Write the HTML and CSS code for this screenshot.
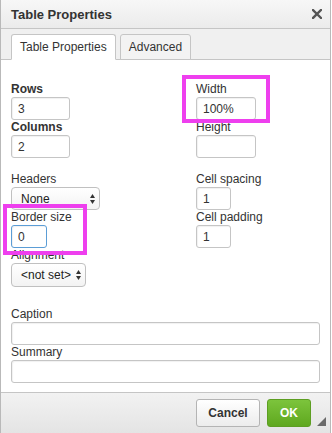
FILE: index.html
```html
<!DOCTYPE html>
<html lang="en">
<head>
<meta charset="utf-8">
<title>Table Properties</title>
<link rel="stylesheet" href="styles.css">
</head>
<body>
<div class="dialog">
  <div class="titlebar">
    <span class="title">Table Properties</span>
    <span class="close" aria-label="Close">
      <svg width="10" height="10" viewBox="0 0 10 10"><path d="M1 1 L9 9 M9 1 L1 9" stroke="#555" stroke-width="2.4" stroke-linecap="square"/></svg>
    </span>
  </div>
  <div class="tabs">
    <div class="tab active">Table Properties</div>
    <div class="tab">Advanced</div>
  </div>
  <div class="body">
    <div class="grid group1">
      <div class="field">
        <label class="lbl strong">Rows</label>
        <input class="txt w59" type="text" value="3">
      </div>
      <div class="field">
        <label class="lbl">Width</label>
        <input class="txt w60" type="text" value="100%">
      </div>
      <div class="field">
        <label class="lbl strong">Columns</label>
        <input class="txt w59" type="text" value="2">
      </div>
      <div class="field">
        <label class="lbl">Height</label>
        <input class="txt w60" type="text" value="">
      </div>
    </div>
    <div class="grid group2">
      <div class="field">
        <label class="lbl">Headers</label>
        <div class="select w89"><span>None</span>
          <svg width="5" height="10" viewBox="0 0 5 10"><polygon points="0,4 2.5,0 5,4" fill="#333"/><polygon points="0,6 2.5,10 5,6" fill="#333"/></svg>
        </div>
      </div>
      <div class="field">
        <label class="lbl">Cell spacing</label>
        <input class="txt w35" type="text" value="1">
      </div>
      <div class="field">
        <label class="lbl">Border size</label>
        <input class="txt w36 focused" type="text" value="0">
      </div>
      <div class="field">
        <label class="lbl">Cell padding</label>
        <input class="txt w35" type="text" value="1">
      </div>
      <div class="field">
        <label class="lbl">Alignment</label>
        <div class="select w75 tall"><span>&lt;not set&gt;</span>
          <svg width="5" height="10" viewBox="0 0 5 10"><polygon points="0,4 2.5,0 5,4" fill="#333"/><polygon points="0,6 2.5,10 5,6" fill="#333"/></svg>
        </div>
      </div>
    </div>
    <div class="wide">
      <label class="lbl">Caption</label>
      <input class="txt full" type="text" value="">
      <label class="lbl">Summary</label>
      <input class="txt full" type="text" value="">
    </div>
  </div>
  <div class="footer">
    <button class="btn cancel">Cancel</button>
    <button class="btn ok">OK</button>
  </div>
  <svg class="grip" width="9" height="9" viewBox="0 0 9 9"><polygon points="9,0 9,9 0,9" fill="#6a6a6a"/></svg>
  <div class="mark mark-width"></div>
  <div class="mark mark-border"></div>
</div>
</body>
</html>
```
FILE: styles.css
```css
* { box-sizing: border-box; }

body {
  margin: 0;
  font-family: "Liberation Sans", Arial, sans-serif;
  font-size: 12px;
  color: #333;
  background: #fff;
}

.dialog {
  position: relative;
  width: 331px;
  height: 433px;
  border-left: 1px solid #b9b9b9;
  border-right: 1px solid #b9b9b9;
  display: flex;
  flex-direction: column;
  background: #fff;
}

.titlebar {
  height: 29px;
  flex: none;
  border-bottom: 1px solid #c5c5c5;
  background: linear-gradient(#f7f7f7, #ebebeb);
  display: flex;
  align-items: center;
  justify-content: space-between;
  padding: 0 8px 0 10px;
}

.title {
  font-weight: bold;
  font-size: 13px;
  color: #333;
}

.close { display: flex; }

.tabs {
  height: 31px;
  flex: none;
  background: #f0f0f0;
  border-bottom: 1px solid #c5c5c5;
  display: flex;
  align-items: flex-end;
  gap: 4px;
  padding-left: 10px;
}

.tab {
  height: 26px;
  margin-bottom: -1px;
  padding: 0 8px;
  line-height: 24px;
  border: 1px solid #c5c5c5;
  border-radius: 3px 3px 0 0;
  background: #f3f3f3;
  color: #333;
}

.tab.active {
  background: #fff;
  border-bottom-color: #fff;
}

.body {
  flex: 1;
  padding: 22px 10px 0 10px;
}

.grid {
  display: grid;
  grid-template-columns: 185px 1fr;
}

.group1 { margin-bottom: 14px; }

.lbl {
  display: block;
  height: 15px;
  line-height: 15px;
  color: #333;
}

.lbl.strong { font-weight: bold; }

.txt {
  display: block;
  height: 23px;
  border: 1px solid #c5c5c5;
  border-radius: 3px;
  padding: 0 6px;
  font-family: inherit;
  font-size: 12px;
  color: #333;
  background: #fff;
  box-shadow: inset 1px 1px 1px rgba(0, 0, 0, 0.06);
  outline: none;
}

.txt.focused { border-color: #5b9dd6; }

.w59 { width: 59px; }
.w60 { width: 60px; }
.w35 { width: 35px; }
.w36 { width: 36px; }
.w89 { width: 89px; }
.w75 { width: 75px; }
.full { width: 100%; }

.select {
  height: 23px;
  border: 1px solid #c0c0c0;
  border-radius: 4px;
  background: linear-gradient(#fff, #f3f3f3);
  display: flex;
  align-items: center;
  justify-content: space-between;
  padding: 0 4px 0 9px;
  color: #222;
}

.select.tall { height: 24px; }

.wide { margin-top: 20px; }

.footer {
  height: 41px;
  flex: none;
  border-top: 1px solid #c5c5c5;
  background: linear-gradient(#f2f2f2, #e4e4e4);
  display: flex;
  justify-content: flex-end;
  align-items: flex-start;
  gap: 7px;
  padding: 6px 19px 0 0;
}

.btn {
  height: 28px;
  border-radius: 3px;
  font-family: inherit;
  font-size: 12px;
  font-weight: bold;
  padding: 0;
}

.cancel {
  width: 64px;
  border: 1px solid #b4b4b4;
  background: linear-gradient(#ffffff, #ececec);
  color: #333;
}

.ok {
  width: 44px;
  border: 1px solid #5d9e22;
  background: linear-gradient(#7cc43c, #5fa81f);
  color: #fff;
}

.grip {
  position: absolute;
  right: 4px;
  bottom: 7px;
}

.mark {
  position: absolute;
  border: 4px solid #ee3fee;
}

.mark-width {
  left: 181px;
  top: 75px;
  width: 88px;
  height: 48px;
}

.mark-border {
  left: 2px;
  top: 204px;
  width: 84px;
  height: 51px;
}
```
